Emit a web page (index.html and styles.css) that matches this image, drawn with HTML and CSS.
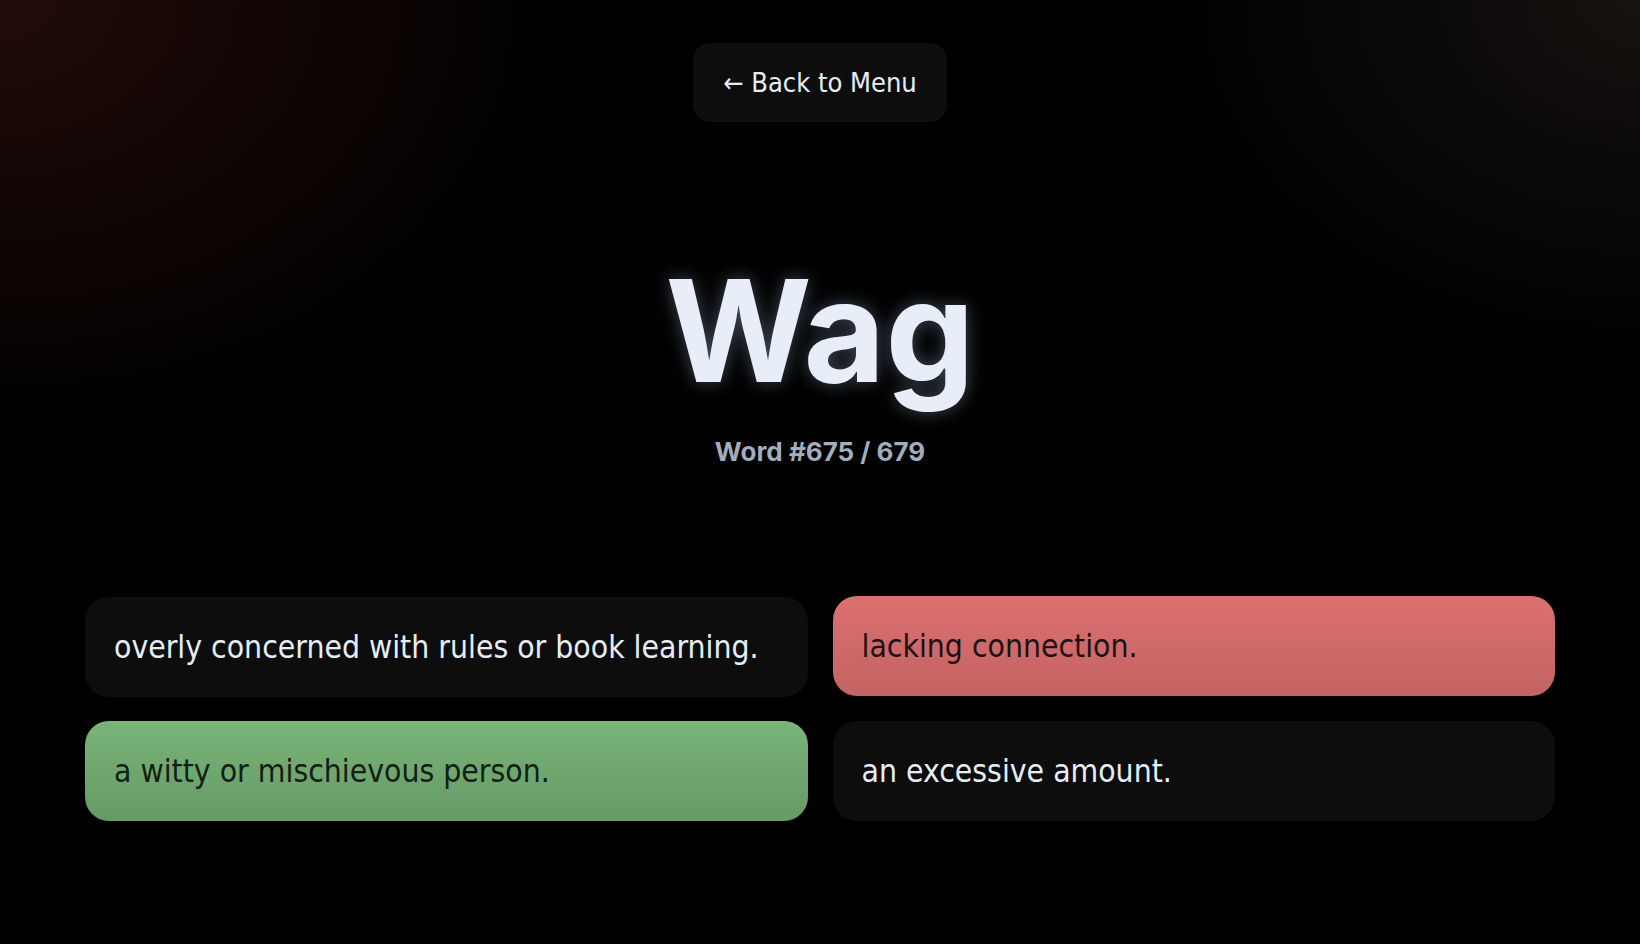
FILE: index.html
```html
<!DOCTYPE html>
<html lang="en">
<head>
    <meta charset="UTF-8">
    <meta name="viewport" content="width=device-width, initial-scale=1.0">
    <title>Vocabulary Quiz</title>
    <link rel="stylesheet" href="styles.css">
</head>
<body>
<main class="quiz">
    <button class="back-btn">&larr; Back to Menu</button>

    <h1 class="word">Wag</h1>
    <p class="word-count">Word #675 / 679</p>

    <div class="options">
        <button class="option">overly concerned with rules or book learning.</button>
        <button class="option wrong">lacking connection.</button>
        <button class="option correct">a witty or mischievous person.</button>
        <button class="option">an excessive amount.</button>
    </div>
</main>
</body>
</html>
```

FILE: styles.css
```css
html, body {
    margin: 0;
    padding: 0;
}

body {
    min-height: 100vh;
    background-color: #000;
    background-image:
        radial-gradient(ellipse 560px 420px at 0 0, rgba(40, 14, 10, 0.85), rgba(0, 0, 0, 0) 100%),
        radial-gradient(ellipse 480px 360px at 100% 0, rgba(24, 20, 18, 0.9), rgba(0, 0, 0, 0) 100%);
    background-repeat: no-repeat;
    color: #e6edf6;
    font-family: "DejaVu Sans", Verdana, sans-serif;
}

.quiz {
    display: flex;
    flex-direction: column;
    align-items: center;
    padding-top: 43px;
}

.back-btn {
    font-family: "DejaVu Sans", sans-serif;
    font-stretch: condensed;
    font-size: 27px;
    color: #e6edf6;
    background-color: #0d0d0d;
    border: none;
    border-radius: 17px;
    padding: 24px 30px;
    cursor: pointer;
}

.word {
    font-family: Inter, "Noto Sans", sans-serif;
    font-weight: 700;
    font-size: 141px;
    line-height: 1;
    margin: 138px 0 0;
    color: #e8eef7;
    text-shadow: 0 0 18px rgba(190, 215, 255, 0.35);
}

.word-count {
    font-family: Inter, "Noto Sans", sans-serif;
    font-weight: 700;
    font-size: 26px;
    color: #a3adbb;
    margin: 35px 0 0;
}

.options {
    display: grid;
    grid-template-columns: 1fr 1fr;
    gap: 24px 25px;
    width: 1470px;
    margin-top: 130px;
}

.option {
    height: 100px;
    padding: 0 29px;
    text-align: left;
    font-family: "DejaVu Sans", sans-serif;
    font-stretch: condensed;
    font-size: 31.6px;
    color: #e6edf6;
    background-color: #0d0d0d;
    border: none;
    border-radius: 24px;
    cursor: pointer;
}

.option.wrong {
    background: linear-gradient(to bottom, #dc7070, #c36363);
    color: #1c1212;
    transform: translateY(-1px);
}

.option.correct {
    background: linear-gradient(to bottom, #79b479, #669966);
    color: #122012;
}
```
